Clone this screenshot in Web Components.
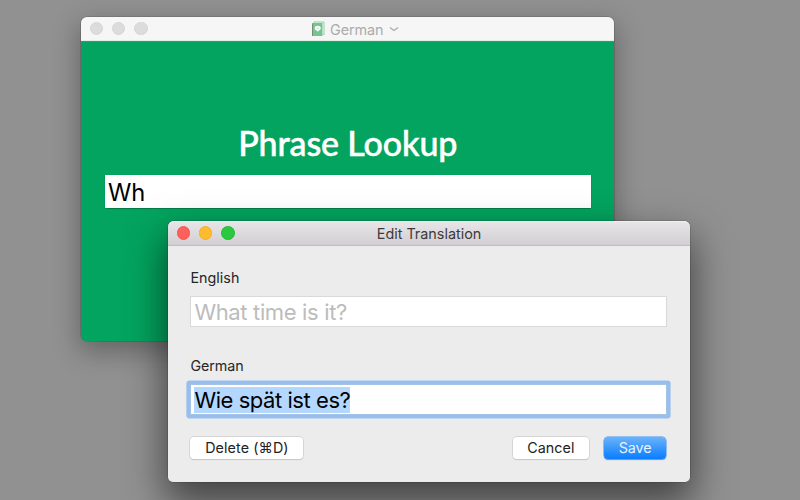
<!DOCTYPE html>
<html lang="en">
<head>
<meta charset="utf-8">
<title>Phrase Lookup</title>
<style>
html,body{margin:0;width:800px;height:500px;overflow:hidden;background:#909090;font-family:Inter,"Liberation Sans",sans-serif}
mac-window.lookup{left:81px;top:17px;width:533px;height:324px}
mac-window.editor{left:168px;top:221px;width:522px;height:261px}
</style>
</head>
<body>
<desk-top>
  <mac-window class="lookup" inactive>
    <title-label slot="title" icon width="53.5">German</title-label>
    <lookup-pane></lookup-pane>
  </mac-window>
  <mac-window class="editor">
    <title-label slot="title" width="104.5">Edit Translation</title-label>
    <translation-form></translation-form>
  </mac-window>
</desk-top>
<script>
function define(name, html, setup) {
  const template = document.createElement('template');
  template.innerHTML = html;
  customElements.define(name, class extends HTMLElement {
    connectedCallback() {
      if (this.shadowRoot) return;
      this.attachShadow({mode: 'open'}).append(template.content.cloneNode(true));
      if (setup) setup(this, this.shadowRoot);
    }
  });
}

define('desk-top', `<style>
  :host{display:block;position:relative;width:800px;height:500px;overflow:hidden;background:#919191}
  ::slotted(mac-window){position:absolute}
</style><slot></slot>`);

/* Text tracked so that its advance equals the width attribute. */
define('fit-text', `<style>
  :host{display:inline-block;white-space:nowrap;flex:none}
  span{display:inline-block}
</style><span><slot></slot></span>`, (el, root) => {
  const target = parseFloat(el.getAttribute('width'));
  const span = root.querySelector('span');
  const natural = span.getBoundingClientRect().width;
  const count = el.textContent.length;
  span.style.letterSpacing = ((target - natural) / count).toFixed(4) + 'px';
});

define('title-label', `<style>
  :host{display:flex;align-items:center;font-size:14.4px;line-height:20px;white-space:nowrap;padding-top:1px}
  :host([icon]){padding-left:14px;padding-top:2px}
  svg{display:none;flex:none}
  :host([icon]) svg{display:block}
  .book{margin:-2px 5.5px 0 0}
  .chev{margin:-1px 0 0 5px}
</style>
<svg class="book" width="14" height="16" viewBox="0 0 14 16">
  <path d="M3 2V1h10v12.5h-1" fill="#f3faf5" stroke="#96cba8" stroke-width="1"/>
  <path d="M1 3.5Q1 2 2.4 2H11.5v13H1z" fill="#75c491"/>
  <path d="M1 3.5Q1 2 2 2V15H1z" fill="#788d73"/>
  <ellipse cx="6.7" cy="7.2" rx="3" ry="2.4" fill="#f7fcf8"/><path d="M5.4 8.8h2.6L6.9 11z" fill="#f7fcf8"/>
  <path d="M5.3 7.2h2.8" stroke="#a8d9b8" stroke-width=".7"/>
</svg>
<span></span>
<svg class="chev" width="10" height="7" viewBox="0 0 10 7"><path d="M1 1.5l4 3 4-3" fill="none" stroke="#aaa" stroke-width="1.3"/></svg>`,
(el, root) => {
  const t = document.createElement('fit-text');
  t.setAttribute('width', el.getAttribute('width'));
  t.textContent = el.textContent;
  root.querySelector('span').replaceWith(t);
});

define('traffic-lights', `<style>
  :host{display:flex;gap:8.7px}
  i{width:13.6px;height:13.6px;border-radius:50%;box-sizing:border-box;border:.8px solid #d6d6d6;background:#dcdcdc}
  :host([active]) i:nth-of-type(1){background:#fc605b;border-color:#f25a55}
  :host([active]) i:nth-of-type(2){background:#fdbc2e;border-color:#f0b12c}
  :host([active]) i:nth-of-type(3){background:#2bc840;border-color:#27be3b}
</style><i></i><i></i><i></i>`);

define('mac-window', `<style>
  :host{display:flex;flex-direction:column;box-sizing:border-box;border-radius:6px;
    box-shadow:0 0 0 .6px rgba(0,0,0,.2),0 18px 38px 3px rgba(0,0,0,.54);color:#3c3a3d}
  :host([inactive]){box-shadow:0 0 0 .6px rgba(0,0,0,.22),0 9px 27px 2px rgba(0,0,0,.3);color:#ababab}
  header{display:grid;grid-template-columns:1fr auto 1fr;align-items:center;height:25px;flex:none;box-sizing:border-box;
    padding:0 8.6px;border-radius:6px 6px 0 0;background:linear-gradient(#e9e6e9,#d2cfd2);border-bottom:1px solid #c0bdc0;box-shadow:inset 0 1px #f1eff1}
  :host([inactive]) header{height:24px;background:#f6f6f6;border-bottom:1px solid #e6ece8;box-shadow:none}
  main{flex:1;display:flex;flex-direction:column;border-radius:0 0 5px 5px;overflow:hidden;background:#ececec}
</style>
<header><traffic-lights></traffic-lights><slot name="title"></slot></header><main><slot></slot></main>`,
(el, root) => { if (!el.hasAttribute('inactive')) root.querySelector('traffic-lights').setAttribute('active', ''); });

define('text-box', `<style>
  :host{display:flex;align-items:center;box-sizing:border-box;height:31px;padding:0 3px;background:#fff;
    border:1px solid #d9d9d9;font-size:22px;line-height:26px;color:#000}
  :host([placeholder]){color:#bcbcbc}
  :host([focused]){box-shadow:0 0 0 3.6px #97bfed;border-color:#a5c3e6;border-radius:1px}
  :host([focused]) ::slotted(fit-text){background:#b3d7ff}
  :host([large]){height:33px;border:0;font-size:23.7px;padding:2px 3px 0;box-shadow:0 .5px 1px rgba(0,50,25,.35),0 -.5px 1px rgba(0,60,30,.25)}
</style><slot></slot>`);

define('lookup-pane', `<style>
  :host{display:flex;flex-direction:column;flex:1;padding:80px 23.5px 0 24px;background:#03a45f;box-shadow:inset 0 1px #2f9f69}
  h1{margin:0 0 10px;height:44px;display:flex;justify-content:center;font:500 34px/44px Lato,sans-serif;color:#fff;-webkit-text-stroke:.5px #fff}
</style>
<h1><fit-text width="219">Phrase Lookup</fit-text></h1>
<text-box large><fit-text width="37">Wh</fit-text></text-box>`);

define('push-button', `<style>
  :host{display:flex;align-items:center;justify-content:center;box-sizing:border-box;height:22px;border-radius:4px;background:#fff;
    box-shadow:0 0 0 .7px #cdcdcd,0 1px 1px rgba(0,0,0,.22);font-size:14.3px;line-height:20px;color:#222}
  :host([primary]){background:linear-gradient(#6bb3fa,#087dff);box-shadow:0 0 0 .5px #3f93f4,0 1px 1px rgba(0,50,150,.4);color:#e8f3ff}
</style><slot></slot>`);

define('translation-form', `<style>
  :host{display:flex;flex-direction:column;padding:22px 23px 0 22.4px;font-size:14.3px;line-height:20px;color:#262626}
  label{display:flex;height:20px}
  .one{margin:8px 0 29px}
  .two{margin:8px 0 22px}
  footer{display:flex}
  .delete{width:113px;margin-right:auto}
  .cancel{width:76px;margin-right:15px}
  .save{width:62.5px;margin-right:.6px}
</style>
<label><fit-text width="49">English</fit-text></label>
<text-box class="one" placeholder><fit-text width="152.5">What time is it?</fit-text></text-box>
<label><fit-text width="53.2">German</fit-text></label>
<text-box class="two" focused><fit-text width="156">Wie spät ist es?</fit-text></text-box>
<footer>
  <push-button class="delete"><fit-text width="83.5">Delete (⌘D)</fit-text></push-button>
  <push-button class="cancel"><fit-text width="47.3">Cancel</fit-text></push-button>
  <push-button class="save" primary><fit-text width="33">Save</fit-text></push-button>
</footer>`);
</script>
</body>
</html>
